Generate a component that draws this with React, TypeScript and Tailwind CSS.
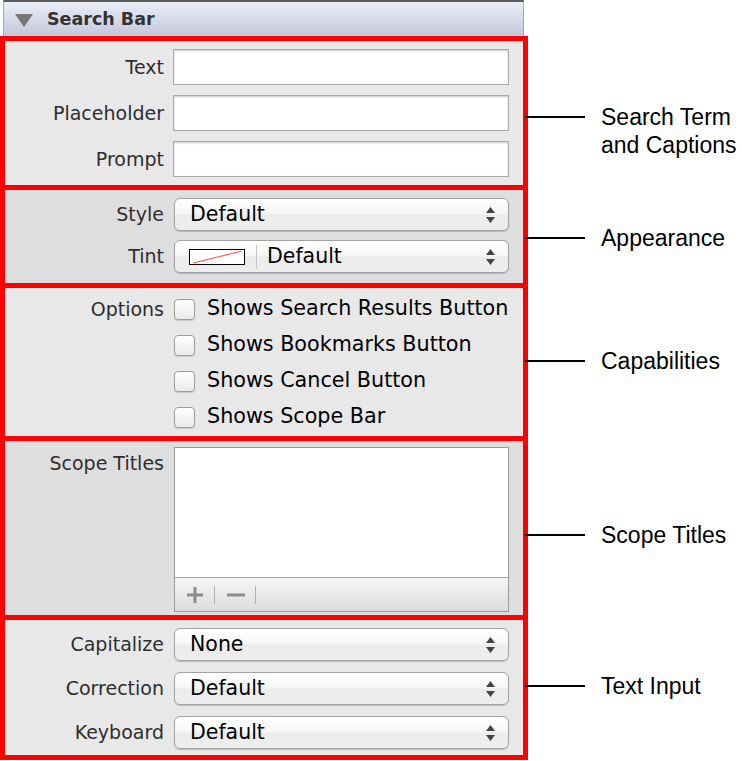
import React from 'react';

const panelFont = { fontFamily: '"DejaVu Sans", "Noto Sans", sans-serif' };
const noteFont = { fontFamily: '"Liberation Sans", Arial, sans-serif' };

const Arrows: React.FC = () => (
  <svg width="11" height="18" viewBox="0 0 11 18" className="ml-auto shrink-0">
    <path d="M5.5 1 L10 7 L1 7 Z" fill="#444" />
    <path d="M5.5 17 L10 11 L1 11 Z" fill="#444" />
  </svg>
);

const Popup: React.FC<{ children: React.ReactNode; pad?: boolean }> = ({ children, pad = true }) => (
  <div
    className={`flex h-[33px] w-[335px] items-center rounded-[6px] border border-[#a2a2a2] bg-[linear-gradient(to_bottom,#ffffff,#f6f6f6_48%,#ebebeb_52%,#eeeeee)] pr-[12px] text-[20.5px] text-black shadow-[0_1px_1px_rgba(0,0,0,0.18)] ${pad ? 'pl-[15px]' : ''}`}
  >
    {children}
    <Arrows />
  </div>
);

const Label: React.FC<{ children: React.ReactNode; className?: string }> = ({ children, className = '' }) => (
  <div className={`w-[159px] shrink-0 text-right text-[19px] text-[#2e2e2e] ${className}`}>{children}</div>
);

const Field: React.FC<{ label: string }> = ({ label }) => (
  <div className="flex items-center gap-[9px]">
    <Label>{label}</Label>
    <div className="h-[36px] w-[336px] border border-[#a9a9a9] bg-white shadow-[inset_0_1px_2px_rgba(0,0,0,0.22)]" />
  </div>
);

const PopupRow: React.FC<{ label: string; value: string }> = ({ label, value }) => (
  <div className="flex items-center gap-[10px]">
    <Label>{label}</Label>
    <Popup>{value}</Popup>
  </div>
);

const Check: React.FC<{ text: string }> = ({ text }) => (
  <div className="flex h-[36px] items-center">
    <div className="h-[21px] w-[21px] rounded-[4px] border border-[#9c9c9c] bg-linear-to-b from-white to-[#e9e9e9] shadow-[0_1px_1px_rgba(0,0,0,0.15)]" />
    <span className="ml-[12px] whitespace-nowrap text-[20.7px] text-black">{text}</span>
  </div>
);

const Note: React.FC<{ lines: string[]; top: string }> = ({ lines, top }) => (
  <div className={`flex items-start ${top}`} style={noteFont}>
    <div className="mt-[13px] -ml-[3px] h-[2px] w-[60px] shrink-0 bg-black" />
    <div className="ml-[16px] text-[23px] leading-[28px] whitespace-nowrap text-black">
      {lines.map((l) => (
        <div key={l}>{l}</div>
      ))}
    </div>
  </div>
);

export default function App() {
  return (
    <div className="flex h-[761px] w-[742px] flex-col overflow-hidden bg-white">
      {/* inspector header */}
      <div
        className="ml-[3px] flex h-[36px] w-[521px] items-center border-x border-t-2 border-x-[#a6a6a6] border-t-[#5c5c5c] bg-linear-to-b from-[#eceef7] to-[#c3c7d9] pl-[11px]"
        style={panelFont}
      >
        <svg width="18" height="13" viewBox="0 0 18 13" className="mt-[2px]">
          <path d="M0 0 L18 0 L9 13 Z" fill="#767676" />
        </svg>
        <span className="ml-[14px] text-[17.5px] font-bold text-[#333]">Search Bar</span>
      </div>

      {/* Search term and captions */}
      <div className="flex">
        <div className="flex h-[154px] w-[528px] shrink-0 flex-col gap-[10px] border-[5px] border-[#ff0000] bg-[#e8e8e8] pt-[8px]" style={panelFont}>
          <Field label="Text" />
          <Field label="Placeholder" />
          <Field label="Prompt" />
        </div>
        <Note lines={['Search Term', 'and Captions']} top="pt-[67px]" />
      </div>

      {/* Appearance */}
      <div className="flex">
        <div className="flex h-[98px] w-[528px] shrink-0 flex-col gap-[9px] border-x-[5px] border-b-[5px] border-[#ff0000] bg-[#dedede] pt-[8px]" style={panelFont}>
          <PopupRow label="Style" value="Default" />
          <div className="flex items-center gap-[10px]">
            <Label>Tint</Label>
            <Popup pad={false}>
              <div className="ml-[14px] h-[16px] w-[56px] border-[1.5px] border-black bg-white">
                <svg width="100%" height="100%" viewBox="0 0 53 13" preserveAspectRatio="none">
                  <line x1="3" y1="12" x2="51" y2="1" stroke="#ff5a4a" strokeWidth="1" />
                </svg>
              </div>
              <div className="ml-[11px] h-[24px] w-px bg-[#c4c4c4]" />
              <span className="ml-[10px]">Default</span>
            </Popup>
          </div>
        </div>
        <Note lines={['Appearance']} top="pt-[34px]" />
      </div>

      {/* Capabilities */}
      <div className="flex">
        <div className="flex h-[153px] w-[528px] shrink-0 gap-[10px] border-x-[5px] border-b-[5px] border-[#ff0000] bg-[#e8e8e8] pt-[3px]" style={panelFont}>
          <Label className="flex h-[36px] items-center justify-end">Options</Label>
          <div className="flex flex-col">
            <Check text="Shows Search Results Button" />
            <Check text="Shows Bookmarks Button" />
            <Check text="Shows Cancel Button" />
            <Check text="Shows Scope Bar" />
          </div>
        </div>
        <Note lines={['Capabilities']} top="pt-[59px]" />
      </div>

      {/* Scope titles */}
      <div className="flex">
        <div className="flex h-[179px] w-[528px] shrink-0 gap-[10px] border-x-[5px] border-b-[5px] border-[#ff0000] bg-[#dedede] pt-[6px]" style={panelFont}>
          <Label className="mt-[5px] leading-[22px]">Scope Titles</Label>
          <div className="flex h-[165px] w-[335px] flex-col border border-[#9a9a9a] bg-white">
            <div className="flex-1" />
            <div className="flex h-[34px] items-center border-t border-[#a8a8a8] bg-linear-to-b from-[#f7f7f7] to-[#dcdcdc]">
              <svg width="18" height="18" viewBox="0 0 18 18" className="ml-[11px]">
                <path d="M9 1 V17 M1 9 H17" stroke="#8c8c8c" strokeWidth="3" />
              </svg>
              <div className="ml-[10px] h-[18px] w-px bg-[#b0b0b0]" />
              <svg width="18" height="4" viewBox="0 0 18 4" className="ml-[12px]">
                <path d="M0 2 H18" stroke="#8c8c8c" strokeWidth="3" />
              </svg>
              <div className="ml-[10px] h-[18px] w-px bg-[#b0b0b0]" />
            </div>
          </div>
        </div>
        <Note lines={['Scope Titles']} top="pt-[80px]" />
      </div>

      {/* Text input */}
      <div className="flex">
        <div className="flex h-[140px] w-[528px] shrink-0 flex-col gap-[11px] border-x-[5px] border-b-[5px] border-[#ff0000] bg-[#e8e8e8] pt-[8px]" style={panelFont}>
          <PopupRow label="Capitalize" value="None" />
          <PopupRow label="Correction" value="Default" />
          <PopupRow label="Keyboard" value="Default" />
        </div>
        <Note lines={['Text Input']} top="pt-[52px]" />
      </div>
    </div>
  );
}
